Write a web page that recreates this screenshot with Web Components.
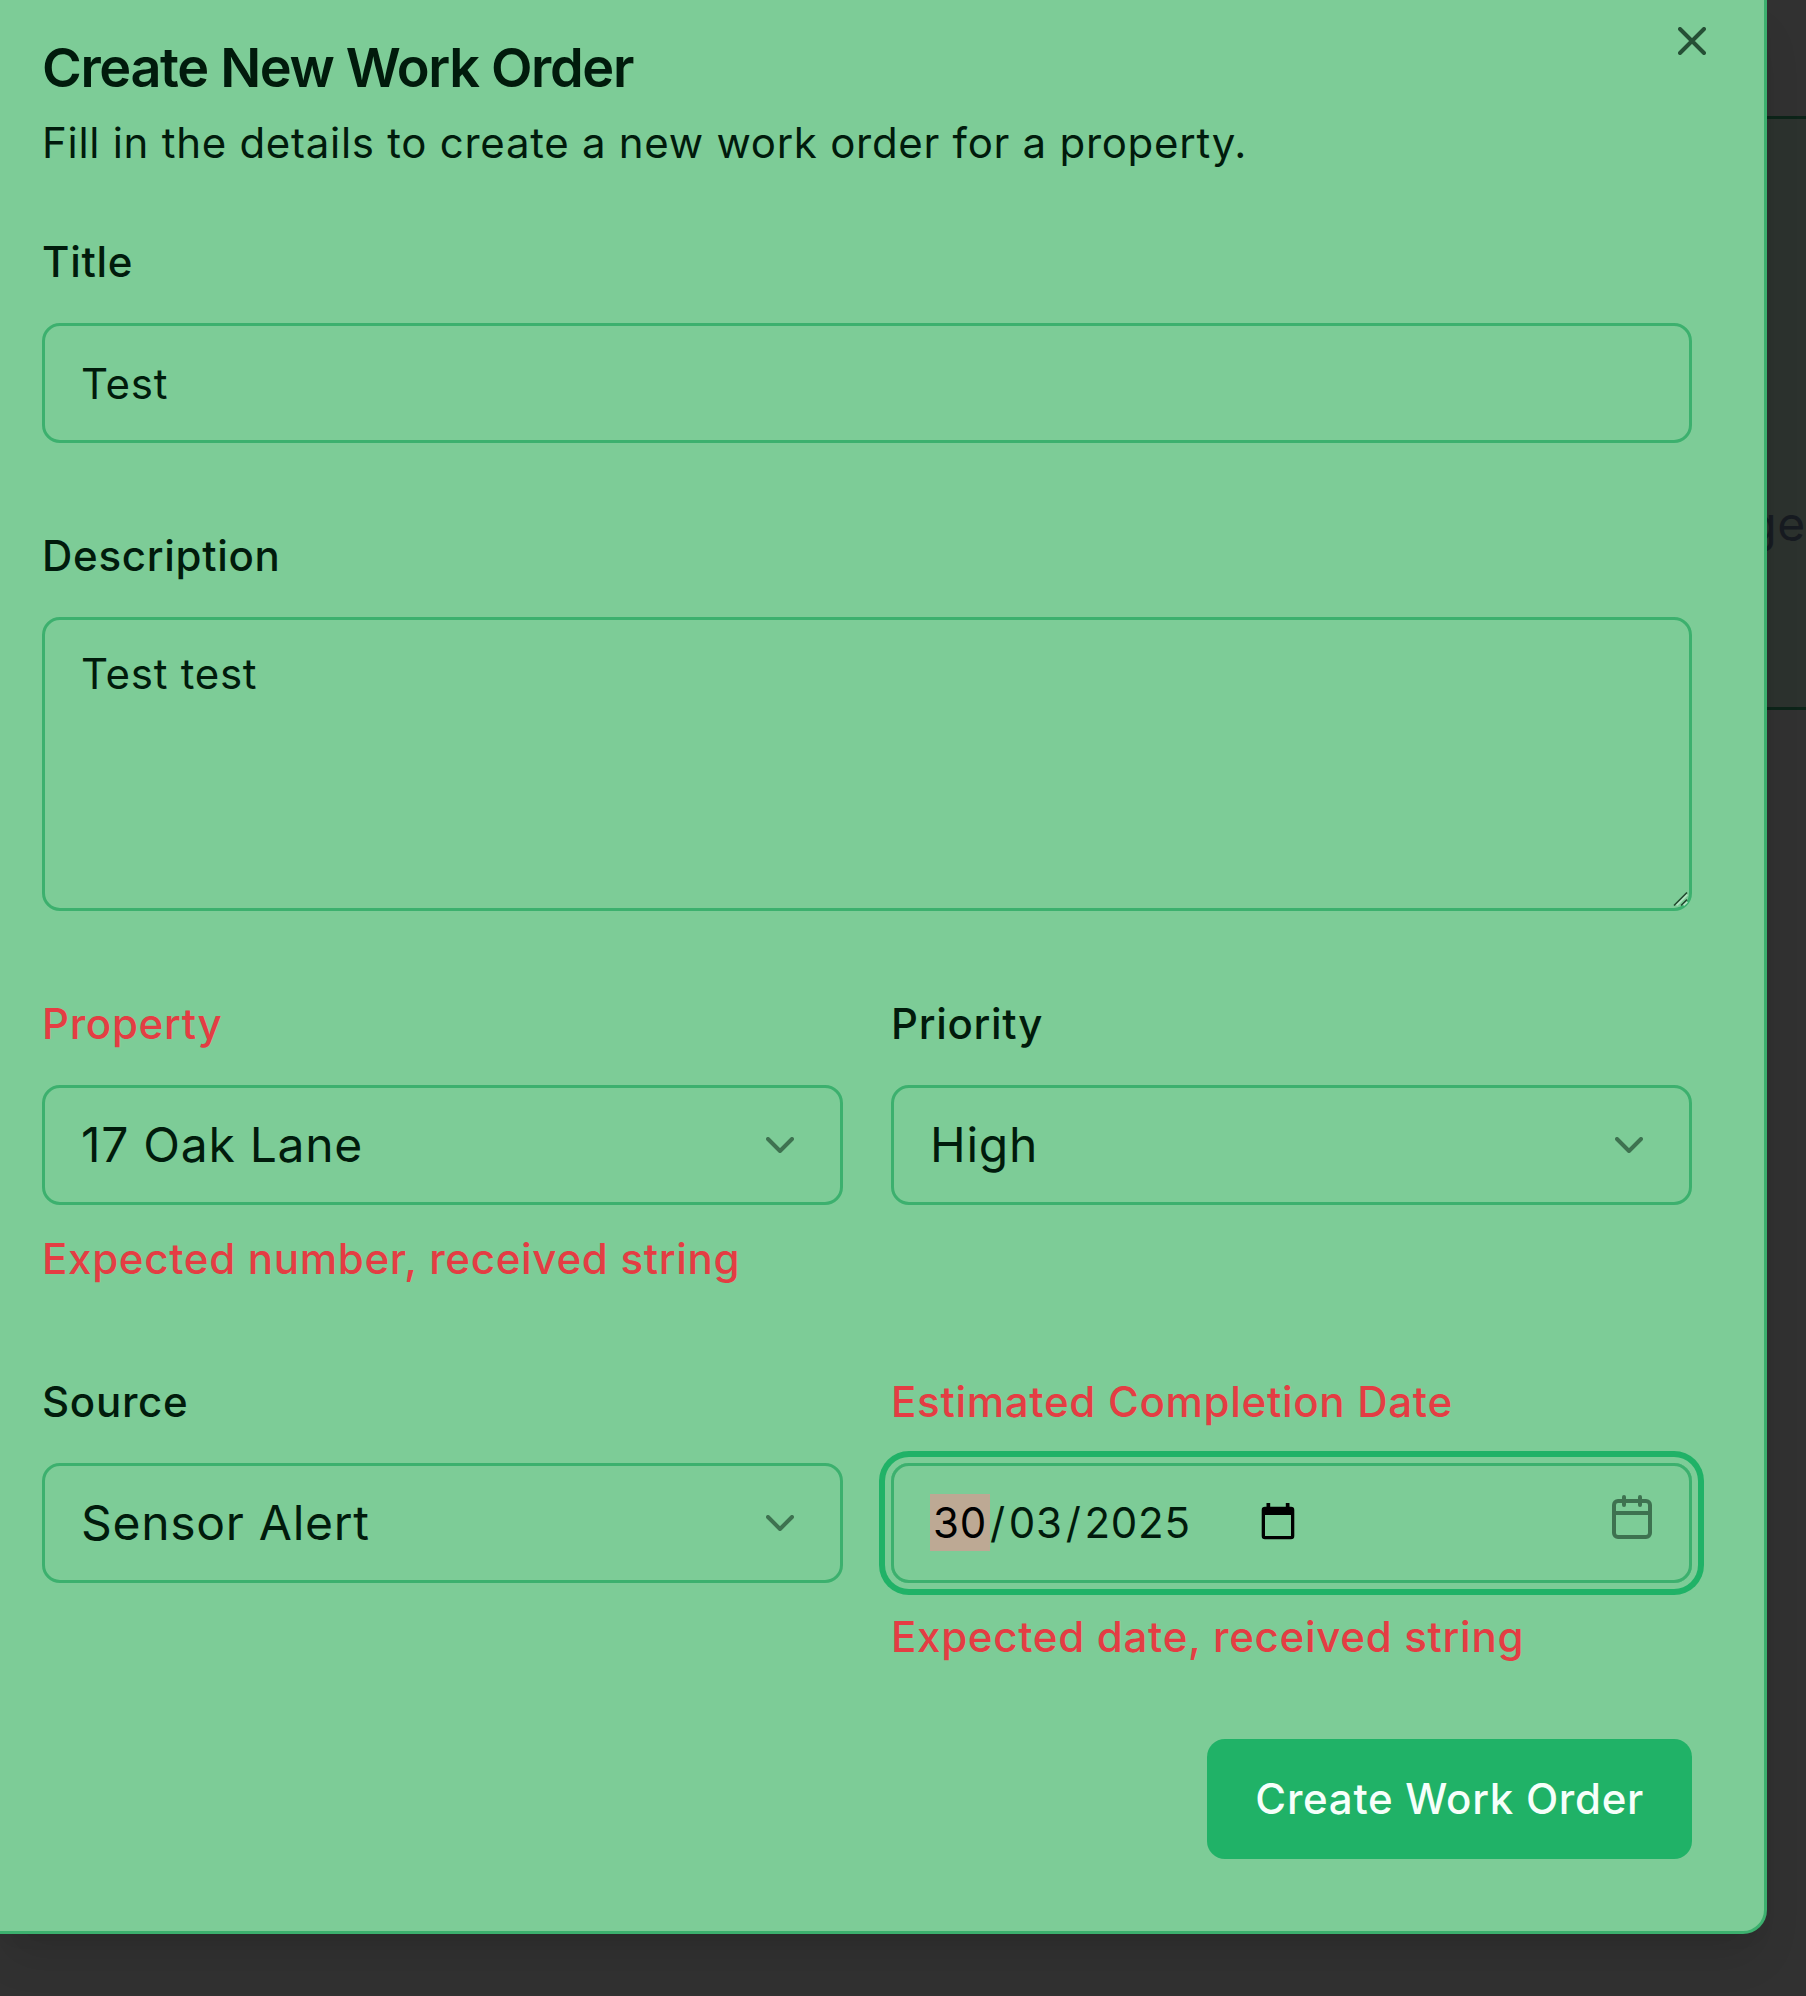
<!DOCTYPE html>
<html lang="en">
<head>
<meta charset="utf-8">
<title>Create New Work Order</title>
<style>
  :root {
    --panel: #7dcc97;
    --ink: #011b0c;
    --line: #3cb06e;
    --primary: #20b267;
    --danger: #e43d43;
  }
  html, body { margin: 0; height: 100%; overflow: hidden; }
  body {
    background: #313131;
    color: var(--ink);
    font-family: Inter, "Liberation Sans", sans-serif;
    font-size: 42px;
    line-height: 60px;
    letter-spacing: 0.72px;
  }
</style>
</head>
<body>
<wo-stage>
  <wo-card slot="behind">ge</wo-card>
  <wo-dialog>
    <span slot="title">Create New Work Order</span>
    <span slot="description">Fill in the details to create a new work order for a property.</span>
    <wo-field label="Title"><wo-input>Test</wo-input></wo-field>
    <wo-field label="Description"><wo-textarea>Test test</wo-textarea></wo-field>
    <wo-row>
      <wo-field label="Property" error="Expected number, received string"><wo-select>17 Oak Lane</wo-select></wo-field>
      <wo-field label="Priority"><wo-select>High</wo-select></wo-field>
    </wo-row>
    <wo-row>
      <wo-field label="Source"><wo-select>Sensor Alert</wo-select></wo-field>
      <wo-field label="Estimated Completion Date" error="Expected date, received string"><wo-date day="30" month="03" year="2025"></wo-date></wo-field>
    </wo-row>
    <wo-button slot="footer">Create Work Order</wo-button>
  </wo-dialog>
</wo-stage>

<script>
const define = (name, render) => customElements.define(name, class extends HTMLElement {
  constructor() {
    super();
    this.attachShadow({ mode: 'open' }).innerHTML = render(this);
  }
});

const box = `box-sizing: border-box; border: 3px solid var(--line); border-radius: 18px;`;

// Page area: the dimmed page shows past the dialog's right edge.
define('wo-stage', () => `
  <style>
    :host { display: block; position: relative; width: 1806px; height: 1996px; overflow: hidden; }
    ::slotted([slot="behind"]) { position: absolute; left: 1700px; top: 116px; }
  </style>
  <slot name="behind"></slot><slot></slot>`);

define('wo-card', () => `
  <style>
    :host {
      display: flex; align-items: flex-start; justify-content: flex-end; box-sizing: border-box;
      width: 106px; height: 594px; padding-top: 369px;
      border: solid #0d2419; border-width: 3px 0; background: #2c322e;
      color: #171b21; font-size: 48px; line-height: 72px;
    }
  </style><slot></slot>`);

define('wo-dialog', () => `
  <style>
    :host {
      display: flex; flex-direction: column; box-sizing: border-box; position: relative;
      width: 1767px; height: 1934px; padding: 41px 72px 72px 42px;
      background: var(--panel); border: solid var(--line); border-width: 0 3px 3px 0;
      border-bottom-right-radius: 24px;
      box-shadow: 0 30px 45px -9px rgba(0,0,0,.1), 0 12px 18px -12px rgba(0,0,0,.1);
    }
    header { display: flex; flex-direction: column; gap: 18px; margin-bottom: 59px; }
    h2 { margin: 0; font-size: 54px; line-height: 54px; font-weight: 600; letter-spacing: -0.025em; }
    p { margin: 0; }
    .form { display: flex; flex-direction: column; gap: 83px; }
    footer { display: flex; justify-content: flex-end; margin-top: 72px; }
    .close { position: absolute; right: 48px; top: 17px; width: 48px; height: 48px; opacity: .7; }
  </style>
  <header><h2><slot name="title"></slot></h2><p><slot name="description"></slot></p></header>
  <div class="form"><slot></slot></div>
  <footer><slot name="footer"></slot></footer>
  <svg class="close" viewBox="0 0 24 24" fill="none" stroke="currentColor" stroke-width="2" stroke-linecap="round" stroke-linejoin="round"><path d="M18 6 6 18M6 6l12 12"/></svg>`);

define('wo-row', () => `
  <style>:host { display: grid; grid-template-columns: 1fr 1fr; gap: 48px; align-items: start; }</style><slot></slot>`);

define('wo-field', el => {
  const error = el.getAttribute('error');
  return `
  <style>
    :host { display: flex; flex-direction: column; }
    label, p { margin: 0; font-weight: 500; }
    label { margin-bottom: 31px; }
    p { margin-top: 24px; }
    .bad { color: var(--danger); }
  </style>
  <label class="${error ? 'bad' : ''}">${el.getAttribute('label')}</label>
  <slot></slot>
  ${error ? `<p class="bad">${error}</p>` : ''}`;
});

define('wo-input', () => `
  <style>:host { display: flex; align-items: center; height: 120px; padding: 2px 36px 0; ${box} }</style><slot></slot>`);

define('wo-textarea', () => `
  <style>
    :host { display: block; position: relative; height: 294px; padding: 24px 36px; ${box} }
    svg { position: absolute; right: 0; bottom: 0; width: 18px; height: 18px; }
  </style>
  <slot></slot>
  <svg viewBox="0 0 18 18" fill="none"><path d="M5.4 15.3 16.2 4.5M12.4 15.3 16.2 11.7" stroke="#b4e6c4" stroke-width="2"/><path d="M3 15.5 16 2.5M10 15.5 16 9.7" stroke="#23492f" stroke-width="1.6"/></svg>`);

define('wo-select', () => `
  <style>
    :host { display: flex; align-items: center; justify-content: space-between; height: 120px; padding: 0 36px; font-size: 48px; line-height: 72px; ${box} }
    svg { width: 48px; height: 48px; opacity: .5; }
  </style>
  <span><slot></slot></span>
  <svg viewBox="0 0 24 24" fill="none" stroke="currentColor" stroke-width="2" stroke-linecap="round" stroke-linejoin="round"><path d="m6 9 6 6 6-6"/></svg>`);

define('wo-date', el => `
  <style>
    :host {
      display: flex; align-items: center; position: relative; height: 120px; padding: 0 36px 1px;
      ${box}
      box-shadow: 0 0 0 6px var(--panel), 0 0 0 12px var(--primary);
    }
    .part { padding: 0 3px; line-height: 57px; }
    .on { background: #bda994; color: #000; }
    .picker { width: 34px; height: 37px; margin: 0 0 3px 67px; }
    .cal { position: absolute; right: 33px; top: 27px; width: 48px; height: 48px; opacity: .5; }
  </style>
  <span class="part on">${el.getAttribute('day')}</span><span>/</span><span class="part">${el.getAttribute('month')}</span><span>/</span><span class="part">${el.getAttribute('year')}</span>
  <svg class="picker" viewBox="0 0 34 37"><path fill="#000" fill-rule="evenodd" d="M5.5 0h3.7v3.7h15.6V0h3.7v3.7H30a3.3 3.3 0 0 1 3.3 3.3v26a3.3 3.3 0 0 1-3.3 3.3H4A3.3 3.3 0 0 1 .7 33V7A3.3 3.3 0 0 1 4 3.7h1.5zM4 12v21h26V12z"/></svg>
  <svg class="cal" viewBox="0 0 24 24" fill="none" stroke="currentColor" stroke-width="2" stroke-linecap="round" stroke-linejoin="round"><path d="M8 2v4M16 2v4M3 10h18"/><rect x="3" y="4" width="18" height="18" rx="2"/></svg>`);

define('wo-button', () => `
  <style>
    :host {
      display: flex; align-items: center; justify-content: center; box-sizing: border-box;
      height: 120px; padding: 0 48px; border-radius: 18px;
      background: var(--primary); color: #f6fffa; font-weight: 500; white-space: nowrap;
    }
  </style><slot></slot>`);
</script>
</body>
</html>
